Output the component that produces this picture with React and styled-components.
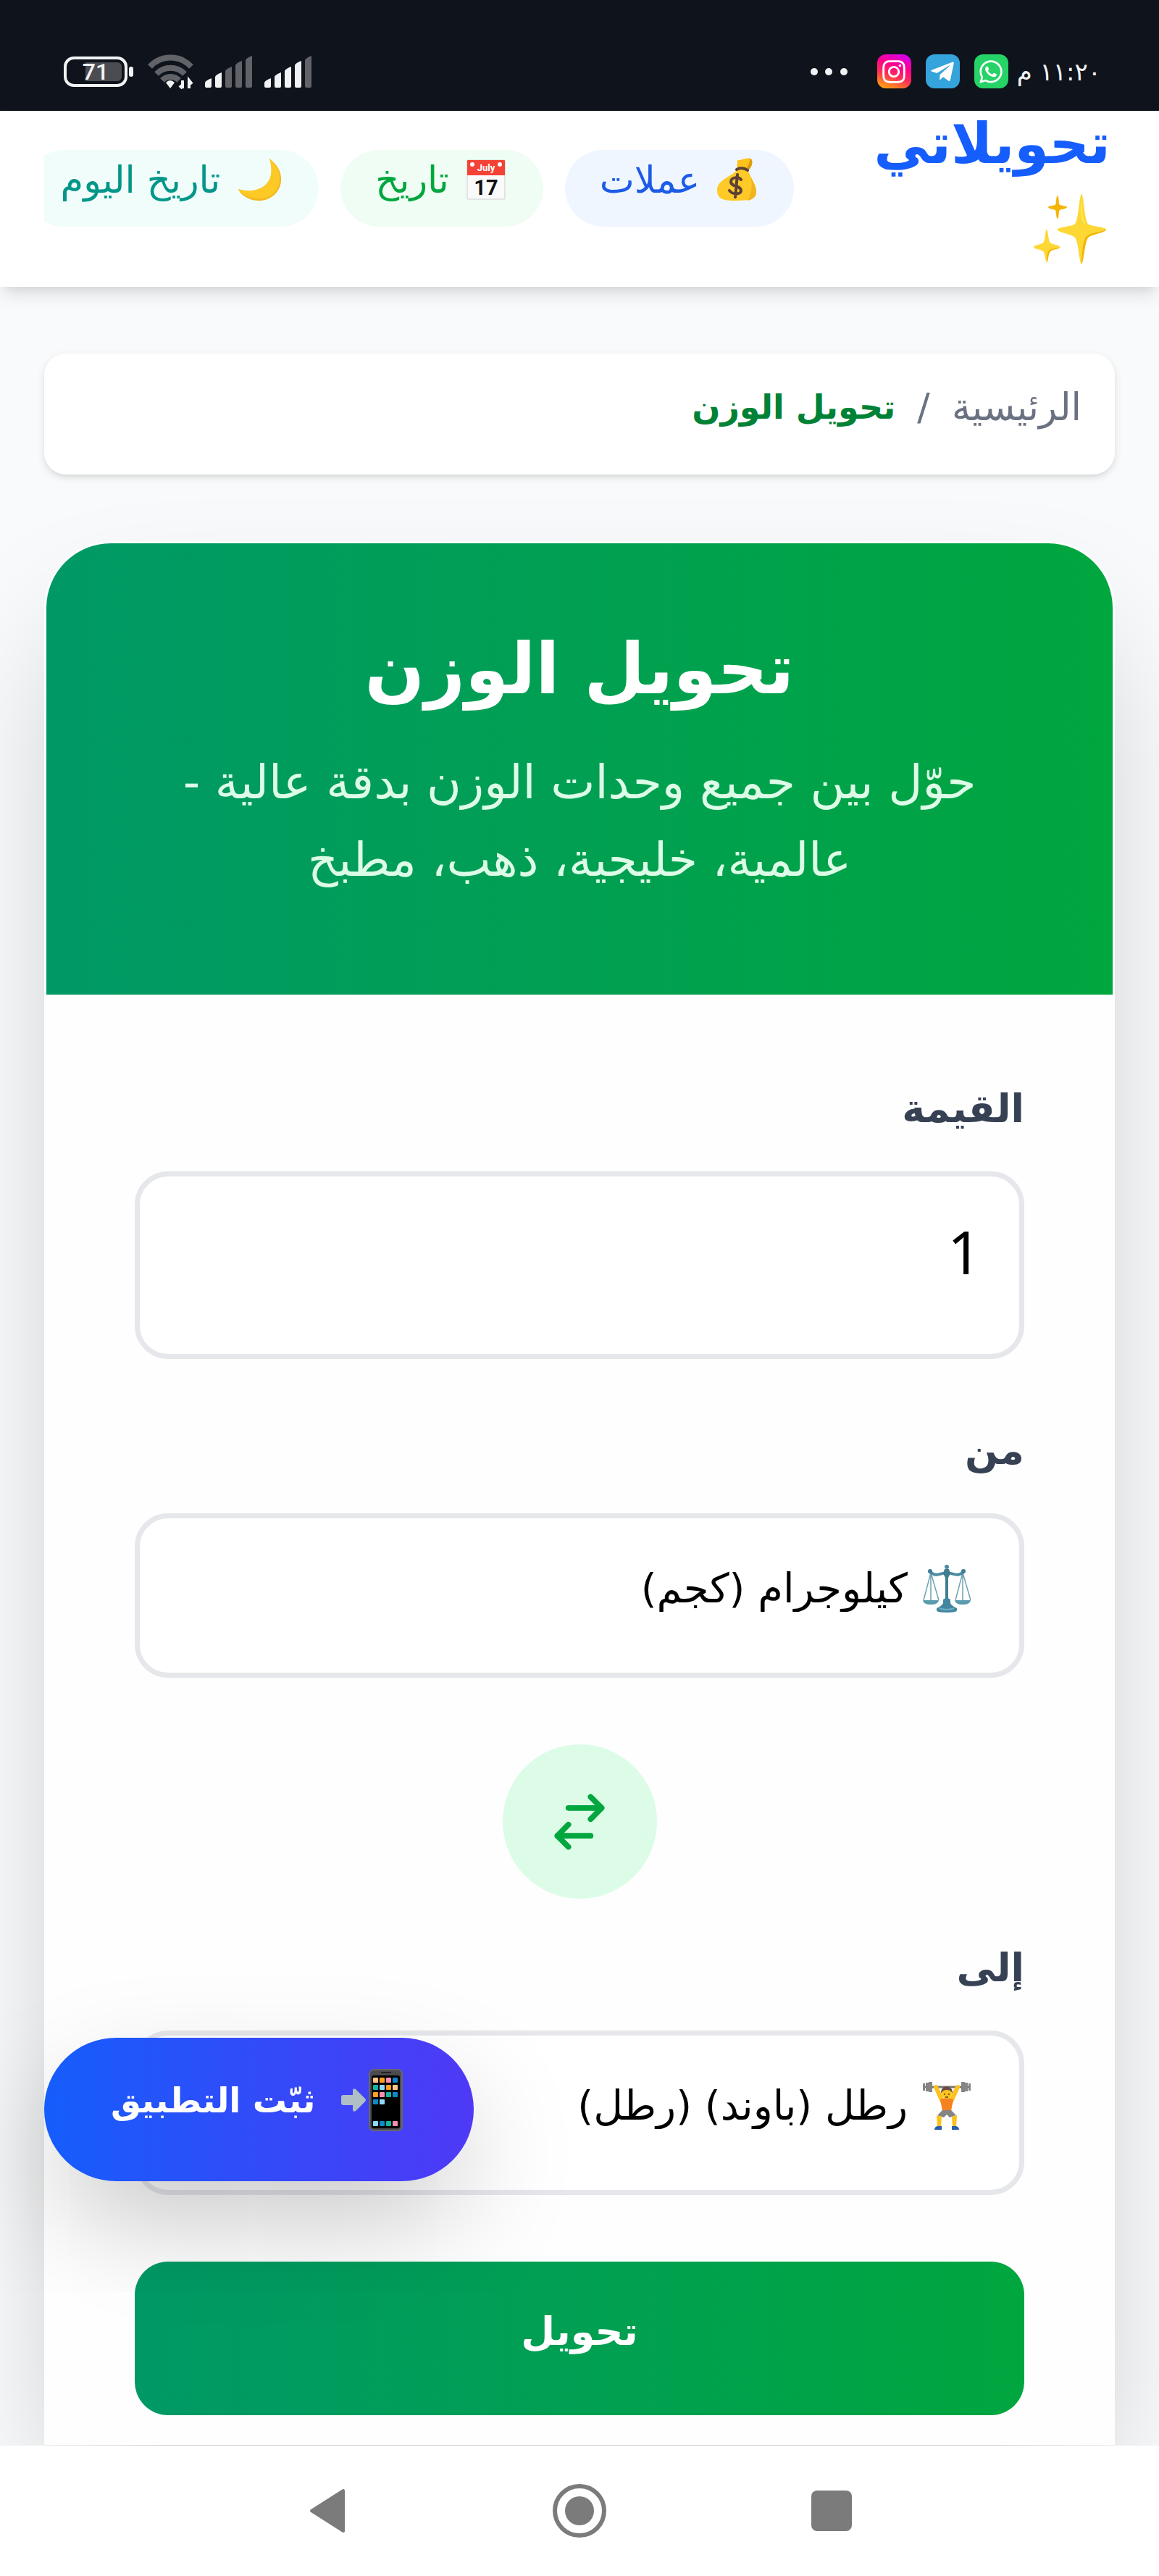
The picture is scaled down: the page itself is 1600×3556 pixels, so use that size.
import React, { useState } from "react";
import styled, { createGlobalStyle } from "styled-components";
import { FaInstagram, FaTelegramPlane, FaWhatsapp } from "react-icons/fa";

const GlobalStyle = createGlobalStyle`
  * {
    box-sizing: border-box;
  }
  body {
    margin: 0;
    background: #f9fafb;
    font-family: "DejaVu Sans", "Noto Sans", sans-serif;
  }
  button,
  input,
  select {
    font-family: inherit;
  }
  svg {
    display: block;
    flex-shrink: 0;
  }
`;

const Page = styled.div`
  min-height: 100vh;
  display: flex;
  flex-direction: column;
  overflow: hidden;
`;

/* status bar */

const StatusBar = styled.div`
  height: 153px;
  padding: 44px 80px 0 88px;
  display: flex;
  align-items: center;
  justify-content: space-between;
  background: #0f131c;
  color: #f1f2f4;
`;

const StatusGroup = styled.div`
  display: flex;
  align-items: center;
  gap: ${(props) => props.$gap}px;
`;

const Battery = styled.div`
  width: 88px;
  height: 42px;
  border: 4px solid #f1f2f4;
  border-radius: 14px;
  display: flex;
  align-items: center;
  justify-content: center;
  background: linear-gradient(90deg, transparent 30%, #4b4c52 30%) content-box;
  padding: 4px;
  font: 500 32px/34px Roboto, sans-serif;
`;

const BatteryTip = styled.span`
  width: 6px;
  height: 14px;
  margin: 0 20px 0 2px;
  border-radius: 3px;
  background: #f1f2f4;
`;

const AppBadge = styled.span`
  width: 47px;
  height: 47px;
  border-radius: 12px;
  display: flex;
  align-items: center;
  justify-content: center;
  font-size: 36px;
  color: #fff;
  background: ${(props) => props.$background};
`;

const Time = styled.time`
  font-size: 34px;
  line-height: 48px;
  margin-left: -8px;
`;

/* header */

const Header = styled.header`
  position: relative;
  height: 243px;
  padding: 0 61px;
  display: flex;
  gap: 104px;
  background: #fff;
  box-shadow: 0 15px 23px -4px rgba(0, 0, 0, 0.1),
    0 8px 15px -8px rgba(0, 0, 0, 0.1);
`;

const Logo = styled.a`
  padding: 0 6px;
  display: flex;
  flex-direction: column;
  gap: 22px;
  color: #155dfc;
  font-size: 77px;
  font-weight: 700;
  line-height: 92px;
  text-decoration: none;
`;

const Nav = styled.nav`
  flex: 1;
  min-width: 0;
  padding-top: 54px;
  display: flex;
  align-items: flex-start;
  gap: 30px;
  overflow: hidden;
`;

const NavPill = styled.a`
  flex-shrink: 0;
  height: 106px;
  padding: 0 52px 24px 48px;
  border-radius: 53px;
  display: flex;
  align-items: center;
  gap: 24px;
  font-size: 51px;
  white-space: nowrap;
  text-decoration: none;
  color: ${(props) => props.$color};
  background: ${(props) => props.$background};
`;

/* content */

const Main = styled.main`
  flex: 1;
  padding: 92px 61px 0;
`;

const Breadcrumb = styled.nav`
  padding: 28px 46px 47px;
  border-radius: 30px;
  display: flex;
  gap: 30px;
  background: #fff;
  box-shadow: 0 4px 12px rgba(0, 0, 0, 0.1), 0 4px 8px -4px rgba(0, 0, 0, 0.1);
  font-size: 52px;
  line-height: 92px;
  color: #6a7282;
`;

const CrumbLink = styled.a`
  color: inherit;
  text-decoration: none;
`;

const CrumbCurrent = styled.span`
  font-size: 46px;
  font-weight: 700;
  color: #008236;
`;

const Card = styled.section`
  margin-top: 92px;
  border: 3px solid #fefefe;
  border-bottom: 0;
  border-radius: 92px 92px 0 0;
  background: #fefefe;
  box-shadow: 0 96px 192px -46px rgba(0, 0, 0, 0.25);
`;

const Hero = styled.div`
  padding: 104px 120px 133px;
  border-radius: 89px 89px 0 0;
  background: linear-gradient(to left, #00a63e, #009966);
  text-align: center;
`;

const Title = styled.h1`
  margin: 0 0 32px;
  font-size: 97px;
  line-height: 140px;
  color: #fff;
`;

const Subtitle = styled.p`
  margin: 0;
  font-size: 65px;
  line-height: 107px;
  color: #dcfce7;
`;

const Form = styled.form`
  padding: 112px 122px 41px;
  display: flex;
  flex-direction: column;
`;

const Label = styled.label`
  margin-bottom: 40px;
  font-size: 54px;
  font-weight: 700;
  line-height: 92px;
  color: #364153;
`;

const Field = styled.div`
  height: 227px;
  margin-bottom: 92px;
  padding: 0 66px 20px;
  border: 7px solid #e5e7eb;
  border-radius: 46px;
  display: flex;
  align-items: center;
  gap: 20px;
  background: #fff;
`;

const ValueField = styled(Field)`
  height: 259px;
  margin-bottom: 81px;
  padding: 0 52px 40px;
`;

const ValueInput = styled.input`
  width: 100%;
  border: 0;
  padding: 0;
  outline: 0;
  background: transparent;
  font-family: "Noto Sans", sans-serif;
  font-size: 82px;
  line-height: 112px;
  color: #000;
`;

const UnitSelect = styled.select`
  flex: 1;
  height: 100px;
  border: 0;
  padding: 0;
  outline: 0;
  appearance: none;
  background: transparent;
  font-size: 56px;
  color: #000;
`;

const SwapButton = styled.button`
  align-self: center;
  width: 213px;
  height: 213px;
  margin-bottom: 50px;
  border: 0;
  border-radius: 50%;
  display: flex;
  align-items: center;
  justify-content: center;
  background: #dcfce7;
`;

const ConvertButton = styled.button`
  height: 212px;
  border: 0;
  border-radius: 46px;
  padding: 0 0 20px;
  background: linear-gradient(to left, #00a63e, #009966);
  font-size: 54px;
  font-weight: 700;
  color: #fff;
`;

const InstallButton = styled.button`
  position: fixed;
  left: 61px;
  bottom: 545px;
  height: 198px;
  padding: 0 98px 26px 92px;
  border: 0;
  border-radius: 99px;
  display: flex;
  align-items: center;
  gap: 36px;
  background: linear-gradient(to left, #4f39f6, #155dfc);
  box-shadow: 0 62px 160px -20px rgba(0, 0, 0, 0.25);
  font-size: 47px;
  font-weight: 700;
  white-space: nowrap;
  color: #fff;
`;

const SystemNav = styled.nav`
  position: relative;
  height: 180px;
  padding: 0 420px;
  display: flex;
  align-items: center;
  justify-content: space-between;
  background: #fff;
`;

const SystemButton = styled.button`
  width: 64px;
  height: 80px;
  border: 0;
  padding: 0;
  display: flex;
  align-items: center;
  justify-content: center;
  background: none;
`;

/* icons */

function Wifi() {
  return (
    <svg width="63" height="48" viewBox="0 0 63 48" fill="none">
      <g stroke="#626369" strokeWidth="8">
        <path d="M3 17a39 39 0 0 1 57 0" />
        <path d="M12 27a27 27 0 0 1 39 0" />
        <path d="M20 36a16 16 0 0 1 23 0" />
      </g>
      <path d="M31 47l-6-8q6-6 12 0z" fill="#f1f2f4" />
      <path d="M48 36v11m-4-4l4 4M57 47V36l4 5" stroke="#f1f2f4" strokeWidth="4" />
    </svg>
  );
}

function Signal({ level }) {
  const bars = [12, 20, 28, 36, 43];
  return (
    <svg width="66" height="44" viewBox="0 0 66 44">
      {bars.map((h, i) => (
        <path
          key={h}
          d={`M${i * 14} ${49 - h}q1-3 9-6V42q0 2-2 2h-5q-2 0-2-2z`}
          fill={i < level ? "#f1f2f4" : "#626369"}
        />
      ))}
    </svg>
  );
}

function Dots() {
  return (
    <svg width="53" height="12" viewBox="0 0 53 12" fill="#f1f2f4">
      <circle cx="6" cy="6" r="5" />
      <circle cx="26" cy="6" r="5" />
      <circle cx="47" cy="6" r="5" />
    </svg>
  );
}

function Sparkles() {
  return (
    <svg width="106" height="98" viewBox="-6 0 106 98">
      <g transform="translate(-6 0)">
        <path d="M66 1c3 0 4 36 9 41 4 4 25 4 25 8s-20 6-25 11c-5 6-6 36-9 36s-4-30-9-36c-4-5-24-7-24-11s20-4 24-8c5-5 6-41 9-41z" fill="#fdd835" />
        <path d="M100 50c0 4-20 6-25 11-5 6-6 36-9 36 1-10 1-30 6-37 5-6 18-6 28-10z" fill="#f4b400" />
        <path d="M66 8c1 15 1 29 6 36-5-2-8-15-6-36z" fill="#ffee58" />
        <path d="M18 50c2 0 2 16 5 18 3 3 13 3 13 6s-10 3-13 6c-3 2-3 15-5 15s-2-13-5-15c-3-3-13-3-13-6s10-3 13-6c3-2 3-18 5-18z" fill="#fdd835" />
        <path d="M36 74c0 3-10 3-13 6-3 2-3 15-5 15 0-6 0-14 4-17 3-2 9-2 14-4z" fill="#f4b400" />
        <path d="M33 3c2 0 1 11 3 13 2 1 10 1 10 3s-9 3-10 4c-2 2-1 12-3 12s-2-10-3-12c-2-1-10-2-10-4s8-2 10-3c1-2 1-13 3-13z" fill="#f4b400" />
      </g>
    </svg>
  );
}

function MoneyBag() {
  return (
    <svg width="54" height="60" viewBox="0 0 54 60">
      <path d="M28 3c5 1 11-4 18-2 4 1 3 11-3 16H30c-4-4-2-8-2-14z" fill="#fdc21b" />
      <path d="M46 1c4 2 3 11-3 16h-6c6-4 7-10 9-16z" fill="#d99b10" />
      <path d="M28 16h14c2 8 11 18 12 29 1 12-8 14-27 14S0 57 0 44c0-14 20-18 28-28z" fill="#ffca28" />
      <path d="M42 17c2 8 11 18 12 29 0 8-4 11-12 13 8-14 7-31 0-42z" fill="#f2b41d" />
      <path d="M27 16c4-3 11-2 15 1" fill="none" stroke="#5d4037" strokeWidth="4" strokeLinecap="round" />
      <path d="M33 30c-4-5-14-3-14 3 0 7 14 5 14 12 0 6-12 6-16 0M28 23l-3 31" fill="none" stroke="#5d4037" strokeWidth="4" strokeLinecap="round" />
    </svg>
  );
}

function Calendar() {
  return (
    <svg width="54" height="56" viewBox="0 0 54 56">
      <rect x="1" y="1" width="52" height="54" rx="1" fill="#fafafa" stroke="#cfcfcf" />
      <path d="M1 2q0-1 1-1h50q1 0 1 1v20H1z" fill="#f44336" />
      <circle cx="8" cy="7" r="3" fill="#fff" />
      <circle cx="46" cy="7" r="3" fill="#fff" />
      <text x="27" y="16" textAnchor="middle" fontFamily="Roboto" fontWeight="700" fontSize="13" fill="#fff">July</text>
      <text x="27" y="49" textAnchor="middle" fontFamily="Roboto" fontWeight="700" fontSize="29" fill="#111">17</text>
    </svg>
  );
}

function Moon() {
  return (
    <svg width="60" height="60" viewBox="0 0 60 60">
      <path d="M44 1c30 22 14 58-14 58C15 59 4 51 1 43c24 8 55-4 43-42z" fill="#f5b71f" />
      <path d="M44 1c26 22 13 55-13 55C17 57 6 50 1 43c24 8 55-4 43-42z" fill="#fdc926" />
    </svg>
  );
}

function Scales() {
  return (
    <svg width="68" height="68" viewBox="0 0 68 68" fill="none">
      <path d="M12 12L2 50m10-38v38m0-38l11 38M56 12L46 50m10-38v38m0-38l11 38" stroke="#6fa3b5" strokeWidth="1.5" />
      <path d="M11 11c9 8 15 1 23 1s14 7 23-1" stroke="#4b8ba1" strokeWidth="4" strokeLinecap="round" />
      <circle cx="11" cy="10" r="3" fill="#3f7d93" />
      <circle cx="57" cy="10" r="3" fill="#3f7d93" />
      <path d="M1 50h22q-1 6-11 6T1 50zM45 50h22q-1 6-11 6t-11-6z" fill="#5b9bb0" />
      <circle cx="34" cy="4" r="3" fill="#4b8ba1" />
      <path d="M31 7h6l2 6-3 6v30h-4V19l-3-6z" fill="#3f7d93" />
      <path d="M29 49q5-4 10 0v5q2 4 9 7v3q0 3-14 3t-14-3v-3q7-3 9-7z" fill="#4286a0" />
      <path d="M24 61q10 4 20 0" stroke="#72b0c6" strokeWidth="2" />
    </svg>
  );
}

function Lifter() {
  return (
    <svg width="68" height="68" viewBox="0 0 68 68">
      <path d="M4 8h60" stroke="#777" strokeWidth="3" />
      <path d="M1 3h3v10H1zM5 2h4v12H5zM9 1h5v14H9zM54 1h5v14h-5zM59 2h4v12h-4zM64 3h3v10h-3z" fill="#858585" />
      <path d="M19 8l10 22M49 8L39 30" stroke="#fcc21b" strokeWidth="6" strokeLinecap="round" />
      <path d="M25 25q9-4 18 0l-3 16H28z" fill="#f58220" />
      <path d="M28 40h12l7 7-9 3-4-4-4 4-9-3z" fill="#858585" />
      <path d="M20 47l7 2-1 14h-5zM48 47l-7 2 1 14h5z" fill="#fcc21b" />
      <path d="M17 67q0-4 4-5h6v5zM51 67q0-4-4-5h-6v5z" fill="#2d5dab" />
      <circle cx="34" cy="17" r="7" fill="#fcc21b" />
      <path d="M26 17c-1-13 17-13 16 0-2-4-5-5-8-5s-6 1-8 5z" fill="#6d4c41" />
      <path d="M31 17v2m6-2v2m-5 3h4" stroke="#5d3b1c" strokeWidth="1.5" />
    </svg>
  );
}

const apps = [
  "#fcc68a #ff9f1c #f48fb1 #0f87c9",
  "#12b5a0 #90d8f7 #ff9f1c #fcc68a",
  "#ff9f1c #f48fb1 #12b5a0 #0f87c9",
  "#0f87c9 #90d8f7",
].map((row) => row.split(" "));
const dock = ["#90d8f7", "#0f87c9", "#12b5a0", "#f48fb1"];

function PhoneArrow() {
  return (
    <svg width="85" height="86" viewBox="0 0 85 86">
      <path d="M3 36h13v-7q1-3 4-1l13 13q2 2 0 4L20 58q-3 2-4-1v-7H3q-3 0-3-3v-8q0-3 3-3z" fill="#b0bec5" />
      <rect x="39" y="1" width="45" height="84" rx="6" fill="#4b4b50" stroke="#66666b" strokeWidth="2" />
      <path d="M55 5h14" stroke="#222" strokeWidth="2" />
      <rect x="42" y="9" width="39" height="73" rx="3" fill="#000" />
      {apps.map((row, y) =>
        row.map((color, x) => (
          <rect key={`${x}-${y}`} x={44 + x * 9} y={12 + y * 10} width="7" height="7" rx="1" fill={color} />
        ))
      )}
      {dock.map((color, x) => (
        <rect key={color} x={44 + x * 9} y="72" width="7" height="7" rx="1" fill={color} />
      ))}
    </svg>
  );
}

function SwapIcon() {
  return (
    <svg width="92" height="92" viewBox="0 0 24 24" fill="none" stroke="#00a63e" strokeWidth="2" strokeLinecap="round" strokeLinejoin="round">
      <path d="M8 7h12m0 0l-4-4m4 4l-4 4m0 6H4m0 0l4 4m-4-4l4-4" />
    </svg>
  );
}

const navItems = [
  { label: "عملات", icon: <MoneyBag />, color: "#1d5be6", background: "#eff6ff" },
  { label: "تاريخ", icon: <Calendar />, color: "#00a63e", background: "#f0fdf4" },
  { label: "تاريخ اليوم", icon: <Moon />, color: "#009689", background: "#f0fdfa" },
];

const units = {
  kg: { label: "كيلوجرام (كجم)", icon: <Scales /> },
  lb: { label: "رطل (باوند) (رطل)", icon: <Lifter /> },
};

function UnitField({ id, value, onChange }) {
  return (
    <Field>
      {units[value].icon}
      <UnitSelect id={id} value={value} onChange={(e) => onChange(e.target.value)}>
        {Object.entries(units).map(([key, unit]) => (
          <option key={key} value={key}>
            {unit.label}
          </option>
        ))}
      </UnitSelect>
    </Field>
  );
}

export default function App() {
  const [amount, setAmount] = useState("1");
  const [from, setFrom] = useState("kg");
  const [to, setTo] = useState("lb");

  const swap = () => {
    setFrom(to);
    setTo(from);
  };

  return (
    <Page dir="rtl" lang="ar">
      <GlobalStyle />
      <StatusBar dir="ltr">
        <StatusGroup $gap={16}>
          <StatusGroup $gap={0}>
            <Battery>71</Battery>
            <BatteryTip />
            <Wifi />
          </StatusGroup>
          <Signal level={2} />
          <Signal level={4} />
        </StatusGroup>
        <StatusGroup $gap={20}>
          <Dots />
          <span />
          <AppBadge $background="linear-gradient(200deg, #c800ff, #ff0090 35%, #ff2a5a 60%, #ffb800)">
            <FaInstagram />
          </AppBadge>
          <AppBadge $background="#35a3dc">
            <FaTelegramPlane />
          </AppBadge>
          <AppBadge $background="#25d366">
            <FaWhatsapp />
          </AppBadge>
          <Time dir="rtl">١١:٢٠ م</Time>
        </StatusGroup>
      </StatusBar>

      <Header>
        <Logo href="#">
          تحويلاتي
          <Sparkles />
        </Logo>
        <Nav>
          {navItems.map((item) => (
            <NavPill key={item.label} href="#" $color={item.color} $background={item.background}>
              {item.icon}
              {item.label}
            </NavPill>
          ))}
        </Nav>
      </Header>

      <Main>
        <Breadcrumb>
          <CrumbLink href="#">الرئيسية</CrumbLink>
          <span>/</span>
          <CrumbCurrent>تحويل الوزن</CrumbCurrent>
        </Breadcrumb>

        <Card>
          <Hero>
            <Title>تحويل الوزن</Title>
            <Subtitle>
              حوّل بين جميع وحدات الوزن بدقة عالية - عالمية، خليجية، ذهب، مطبخ
            </Subtitle>
          </Hero>
          <Form onSubmit={(e) => e.preventDefault()}>
            <Label htmlFor="amount">القيمة</Label>
            <ValueField>
              <ValueInput
                id="amount"
                inputMode="decimal"
                value={amount}
                onChange={(e) => setAmount(e.target.value)}
              />
            </ValueField>
            <Label htmlFor="from">من</Label>
            <UnitField id="from" value={from} onChange={setFrom} />
            <SwapButton type="button" aria-label="تبديل" onClick={swap}>
              <SwapIcon />
            </SwapButton>
            <Label htmlFor="to">إلى</Label>
            <UnitField id="to" value={to} onChange={setTo} />
            <ConvertButton type="submit">تحويل</ConvertButton>
          </Form>
        </Card>
      </Main>

      <InstallButton type="button">
        <PhoneArrow />
        ثبّت التطبيق
      </InstallButton>

      <SystemNav dir="ltr">
        <SystemButton aria-label="رجوع">
          <svg width="50" height="64" viewBox="0 0 50 64">
            <path d="M3 32L47 4v56z" fill="#7b7b7b" stroke="#7b7b7b" strokeWidth="4" strokeLinejoin="round" />
          </svg>
        </SystemButton>
        <SystemButton aria-label="الشاشة الرئيسية">
          <svg width="76" height="76" viewBox="0 0 76 76">
            <circle cx="38" cy="38" r="34" fill="none" stroke="#7b7b7b" strokeWidth="6" />
            <circle cx="38" cy="38" r="20" fill="#7b7b7b" />
          </svg>
        </SystemButton>
        <SystemButton aria-label="التطبيقات الأخيرة">
          <svg width="56" height="56" viewBox="0 0 56 56">
            <rect width="56" height="56" rx="8" fill="#7b7b7b" />
          </svg>
        </SystemButton>
      </SystemNav>
    </Page>
  );
}
